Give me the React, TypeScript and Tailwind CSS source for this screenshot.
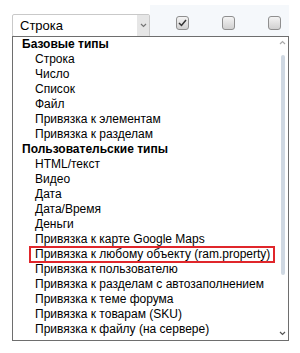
import React from "react";

const groups: { title: string; items: string[] }[] = [
  {
    title: "Базовые типы",
    items: ["Строка", "Число", "Список", "Файл", "Привязка к элементам", "Привязка к разделам"],
  },
  {
    title: "Пользовательские типы",
    items: [
      "HTML/текст",
      "Видео",
      "Дата",
      "Дата/Время",
      "Деньги",
      "Привязка к карте Google Maps",
      "Привязка к любому объекту (ram.property)",
      "Привязка к пользователю",
      "Привязка к разделам с автозаполнением",
      "Привязка к теме форума",
      "Привязка к товарам (SKU)",
      "Привязка к файлу (на сервере)",
    ],
  },
];

function Checkbox({ checked }: { checked?: boolean }) {
  return (
    <div className="w-[13px] h-[14px] rounded-[3px] border border-[#8f8f8f] bg-gradient-to-b from-[#f4f4f4] to-[#d0d0d0] flex items-center justify-center shrink-0">
      {checked && (
        <svg width="9" height="8" viewBox="0 0 9 8">
          <path d="M1 4 L3.5 6.5 L8 1" fill="none" stroke="#333" strokeWidth="1.5" />
        </svg>
      )}
    </div>
  );
}

export default function App() {
  return (
    <div
      className="relative w-[300px] h-[353px] bg-white overflow-hidden"
      style={{ fontFamily: '"Liberation Sans", Arial, sans-serif' }}
    >
      <div className="flex items-start pt-[5px] pl-[12px]">
        <div className="mt-[9px] w-[138px] h-[23px] border border-[#c9c9c9] rounded-[2px] flex items-stretch bg-white">
          <div className="flex-1 pl-[7px] text-[13px] leading-[21px] text-black">Строка</div>
          <div className="w-[12px] bg-[#e6e6e6] flex items-center justify-center">
            <svg width="7" height="5" viewBox="0 0 7 5">
              <path d="M1 1 L3.5 3.5 L6 1" fill="none" stroke="#777" strokeWidth="1.2" />
            </svg>
          </div>
        </div>
        <div className="w-[139px] h-[31px] bg-[#f5f8fb] flex items-start pl-[26px] gap-[33px] pt-[11px]">
          <Checkbox checked />
          <Checkbox />
          <Checkbox />
        </div>
      </div>

      <div className="absolute left-[12px] top-[36px] w-[277px] h-[305px] border border-[#6e6e6e] bg-white flex">
        <div className="flex-1 flex flex-col text-[12px] leading-[15px] text-black">
          {groups.map((g) => (
            <React.Fragment key={g.title}>
              <div className="pl-[9px] font-bold h-[15px]">{g.title}</div>
              {g.items.map((it) => {
                const sel = it.includes("ram.property");
                return (
                  <div
                    key={it}
                    className={
                      "ml-[17px] mr-[3px] pl-[5px] h-[15px] whitespace-nowrap " +
                      (sel ? "outline outline-2 outline-[#e0262b] -outline-offset-1" : "")
                    }
                  >
                    {it}
                  </div>
                );
              })}
            </React.Fragment>
          ))}
        </div>
        <div className="w-[11px] flex flex-col items-center pt-[3px] pb-[4px]">
          <svg width="7" height="5" viewBox="0 0 7 5">
            <path d="M1 4 L3.5 1.5 L6 4" fill="none" stroke="#aaa" strokeWidth="1.2" />
          </svg>
          <div className="mt-[10px] w-[4px] h-[220px] rounded-[2px] bg-[#cfd8e2]" />
          <div className="flex-1" />
          <svg width="7" height="5" viewBox="0 0 7 5">
            <path d="M1 1 L3.5 3.5 L6 1" fill="none" stroke="#555" strokeWidth="1.2" />
          </svg>
        </div>
      </div>
    </div>
  );
}
